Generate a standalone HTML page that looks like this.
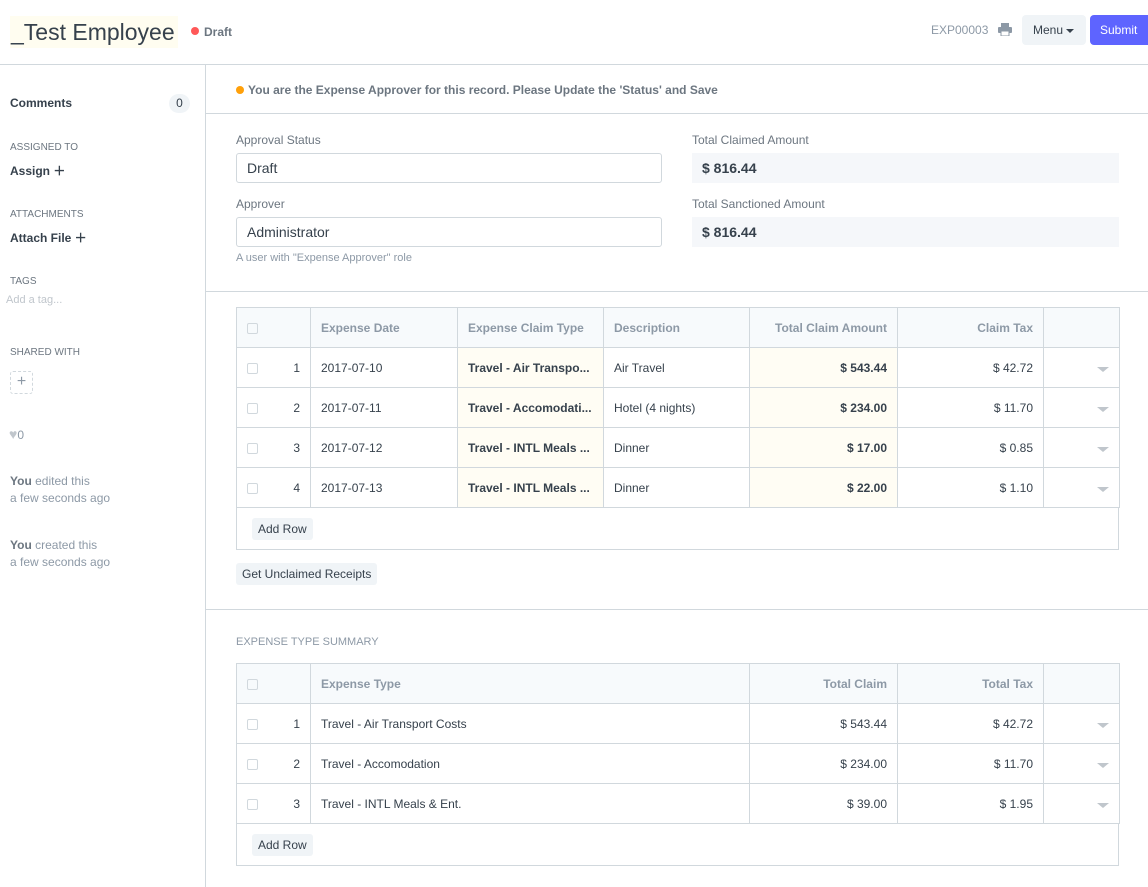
<!DOCTYPE html>
<html><head><style>
*{box-sizing:border-box;margin:0;padding:0}
body{width:1148px;height:887px;overflow:hidden;background:#fff;font-family:"Liberation Sans",sans-serif;font-size:13px;color:#36414c;position:relative}
.abs{position:absolute}
.hdr{left:0;top:0;width:1148px;height:65px;border-bottom:1px solid #d1d8dd}
.title{left:10px;top:16px;height:32px;width:168px;background:#fffdf0;font-size:23px;color:#36414c;padding:0 1px;line-height:33px;white-space:nowrap}
.side{left:0;top:65px;width:206px;height:822px;border-right:1px solid #d1d8dd}
.lbl{font-size:10px;color:#6c7680;text-transform:uppercase}
.b{font-weight:bold}
.sect{border-bottom:1px solid #d1d8dd;left:206px;width:942px}
.inp{border:1px solid #d1d8dd;border-radius:3px;height:30px;padding:0 10px;line-height:28px;font-size:14px;background:#fff}
.ro{background:#f5f7fa;height:30px;padding:0 10px;line-height:30px;font-size:14px;font-weight:bold}
.fl{color:#6c7680;font-size:12px}
table{border-collapse:collapse;position:absolute;left:236px;width:883px;table-layout:fixed}
td,th{border:1px solid #d1d8dd;height:40px;padding:0 10px;font-size:12px;white-space:nowrap;overflow:hidden}
th{background:#f7fafc;color:#8d99a6;font-weight:bold;text-align:left}
.cb{display:inline-block;width:11px;height:11px;border:1px solid #d1d8dd;border-radius:2px;vertical-align:middle}
.r{text-align:right}
.y{background:#fffdf4}
.caret{display:inline-block;border-left:6px solid transparent;border-right:6px solid transparent;border-top:5px solid #c0c6cc}
.btn{background:#f0f4f7;border-radius:3px;font-size:12px;padding:0 6px;height:22px;line-height:22px;display:inline-block}
.ftr{border:1px solid #d1d8dd;border-top:none;left:236px;width:883px;height:43px}
</style></head><body>
<div class="abs hdr"></div>
<div class="abs title">_Test Employee</div>
<div class="abs" style="left:191px;top:27px;width:8px;height:8px;border-radius:50%;background:#ff5858"></div>
<div class="abs b" style="left:204px;top:25px;font-size:12px;color:#6c7680">Draft</div>
<div class="abs" style="left:931px;top:23px;font-size:12px;color:#8d99a6">EXP00003</div>
<svg class="abs" style="left:998px;top:23px" width="14" height="13" viewBox="0 0 14 13"><rect x="3" y="0" width="8" height="4" fill="#8d99a6"/><rect x="0" y="4" width="14" height="6" rx="1" fill="#8d99a6"/><rect x="3" y="8" width="8" height="5" fill="#fff" stroke="#8d99a6"/></svg>
<div class="abs" style="left:1022px;top:15px;width:64px;height:30px;background:#f0f4f7;border-radius:4px;line-height:30px;padding-left:11px;font-size:12px">Menu <span class="caret" style="border-top-color:#36414c;border-left-width:4px;border-right-width:4px;border-top-width:4px;vertical-align:middle"></span></div>
<div class="abs" style="left:1090px;top:15px;width:58px;height:30px;background:#5e64ff;border-radius:4px 0 0 4px;color:#fff;line-height:30px;padding-left:10px;font-size:12px">Submit</div>

<div class="abs side"></div>
<div class="abs b" style="left:10px;top:96px;font-size:12px">Comments</div>
<div class="abs" style="left:169px;top:94px;width:21px;height:19px;border-radius:10px;background:#f0f4f7;text-align:center;line-height:19px;font-size:12px">0</div>
<div class="abs lbl" style="left:10px;top:142px">Assigned To</div>
<div class="abs b" style="left:10px;top:162px;font-size:12px">Assign ＋</div>
<div class="abs lbl" style="left:10px;top:209px">Attachments</div>
<div class="abs b" style="left:10px;top:229px;font-size:12px">Attach File ＋</div>
<div class="abs lbl" style="left:10px;top:276px">Tags</div>
<div class="abs" style="left:6px;top:294px;font-size:11px;color:#c0c6cc">Add a tag...</div>
<div class="abs lbl" style="left:10px;top:347px">Shared With</div>
<div class="abs" style="left:10px;top:371px;width:23px;height:23px;border:1px dashed #d1d8dd;border-radius:3px;text-align:center;line-height:20px;color:#8d99a6;font-size:16px">+</div>
<div class="abs" style="left:9px;top:426px;font-size:12px;color:#8d99a6"><span style="color:#c0c6cc;font-size:14px">♥</span>0</div>
<div class="abs" style="left:10px;top:473px;font-size:12px;color:#8d99a6;line-height:17px"><b style="color:#6c7680">You</b> edited this<br>a few seconds ago</div>
<div class="abs" style="left:10px;top:537px;font-size:12px;color:#8d99a6;line-height:17px"><b style="color:#6c7680">You</b> created this<br>a few seconds ago</div>

<div class="abs sect" style="top:65px;height:49px"></div>
<div class="abs" style="left:236px;top:86px;width:8px;height:8px;border-radius:50%;background:#ffa00a"></div>
<div class="abs b" style="left:248px;top:83px;font-size:12px;color:#6c7680">You are the Expense Approver for this record. Please Update the 'Status' and Save</div>
<div class="abs sect" style="top:114px;height:178px"></div>
<div class="abs fl" style="left:236px;top:133px">Approval Status</div>
<div class="abs inp" style="left:236px;top:153px;width:426px">Draft</div>
<div class="abs fl" style="left:236px;top:197px">Approver</div>
<div class="abs inp" style="left:236px;top:217px;width:426px">Administrator</div>
<div class="abs" style="left:236px;top:252px;font-size:11px;color:#8d99a6">A user with "Expense Approver" role</div>
<div class="abs fl" style="left:692px;top:133px">Total Claimed Amount</div>
<div class="abs ro" style="left:692px;top:153px;width:427px">$ 816.44</div>
<div class="abs fl" style="left:692px;top:197px">Total Sanctioned Amount</div>
<div class="abs ro" style="left:692px;top:217px;width:427px">$ 816.44</div>

<table style="top:307px">
<colgroup><col style="width:74px"><col style="width:147px"><col style="width:146px"><col style="width:146px"><col style="width:148px"><col style="width:146px"><col style="width:76px"></colgroup>
<tr><th><span class="cb"></span></th><th>Expense Date</th><th>Expense Claim Type</th><th>Description</th><th class="r">Total Claim Amount</th><th class="r">Claim Tax</th><th></th></tr>
<tr><td><span class="cb"></span><span style="float:right">1</span></td><td>2017-07-10</td><td class="y b">Travel - Air Transpo...</td><td>Air Travel</td><td class="y b r">$ 543.44</td><td class="r">$ 42.72</td><td class="r"><span class="caret"></span></td></tr>
<tr><td><span class="cb"></span><span style="float:right">2</span></td><td>2017-07-11</td><td class="y b">Travel - Accomodati...</td><td>Hotel (4 nights)</td><td class="y b r">$ 234.00</td><td class="r">$ 11.70</td><td class="r"><span class="caret"></span></td></tr>
<tr><td><span class="cb"></span><span style="float:right">3</span></td><td>2017-07-12</td><td class="y b">Travel - INTL Meals ...</td><td>Dinner</td><td class="y b r">$ 17.00</td><td class="r">$ 0.85</td><td class="r"><span class="caret"></span></td></tr>
<tr><td><span class="cb"></span><span style="float:right">4</span></td><td>2017-07-13</td><td class="y b">Travel - INTL Meals ...</td><td>Dinner</td><td class="y b r">$ 22.00</td><td class="r">$ 1.10</td><td class="r"><span class="caret"></span></td></tr>
</table>
<div class="abs ftr" style="top:507px"></div>
<div class="abs btn" style="left:252px;top:518px">Add Row</div>
<div class="abs btn" style="left:236px;top:563px">Get Unclaimed Receipts</div>
<div class="abs" style="left:206px;top:609px;width:942px;border-top:1px solid #d1d8dd"></div>
<div class="abs lbl" style="left:236px;top:636px;font-size:11px;color:#8d99a6">Expense Type Summary</div>

<table style="top:663px">
<colgroup><col style="width:74px"><col style="width:439px"><col style="width:148px"><col style="width:146px"><col style="width:76px"></colgroup>
<tr><th><span class="cb"></span></th><th>Expense Type</th><th class="r">Total Claim</th><th class="r">Total Tax</th><th></th></tr>
<tr><td><span class="cb"></span><span style="float:right">1</span></td><td>Travel - Air Transport Costs</td><td class="r">$ 543.44</td><td class="r">$ 42.72</td><td class="r"><span class="caret"></span></td></tr>
<tr><td><span class="cb"></span><span style="float:right">2</span></td><td>Travel - Accomodation</td><td class="r">$ 234.00</td><td class="r">$ 11.70</td><td class="r"><span class="caret"></span></td></tr>
<tr><td><span class="cb"></span><span style="float:right">3</span></td><td>Travel - INTL Meals &amp; Ent.</td><td class="r">$ 39.00</td><td class="r">$ 1.95</td><td class="r"><span class="caret"></span></td></tr>
</table>
<div class="abs ftr" style="top:823px"></div>
<div class="abs btn" style="left:252px;top:834px">Add Row</div>
</body></html>
